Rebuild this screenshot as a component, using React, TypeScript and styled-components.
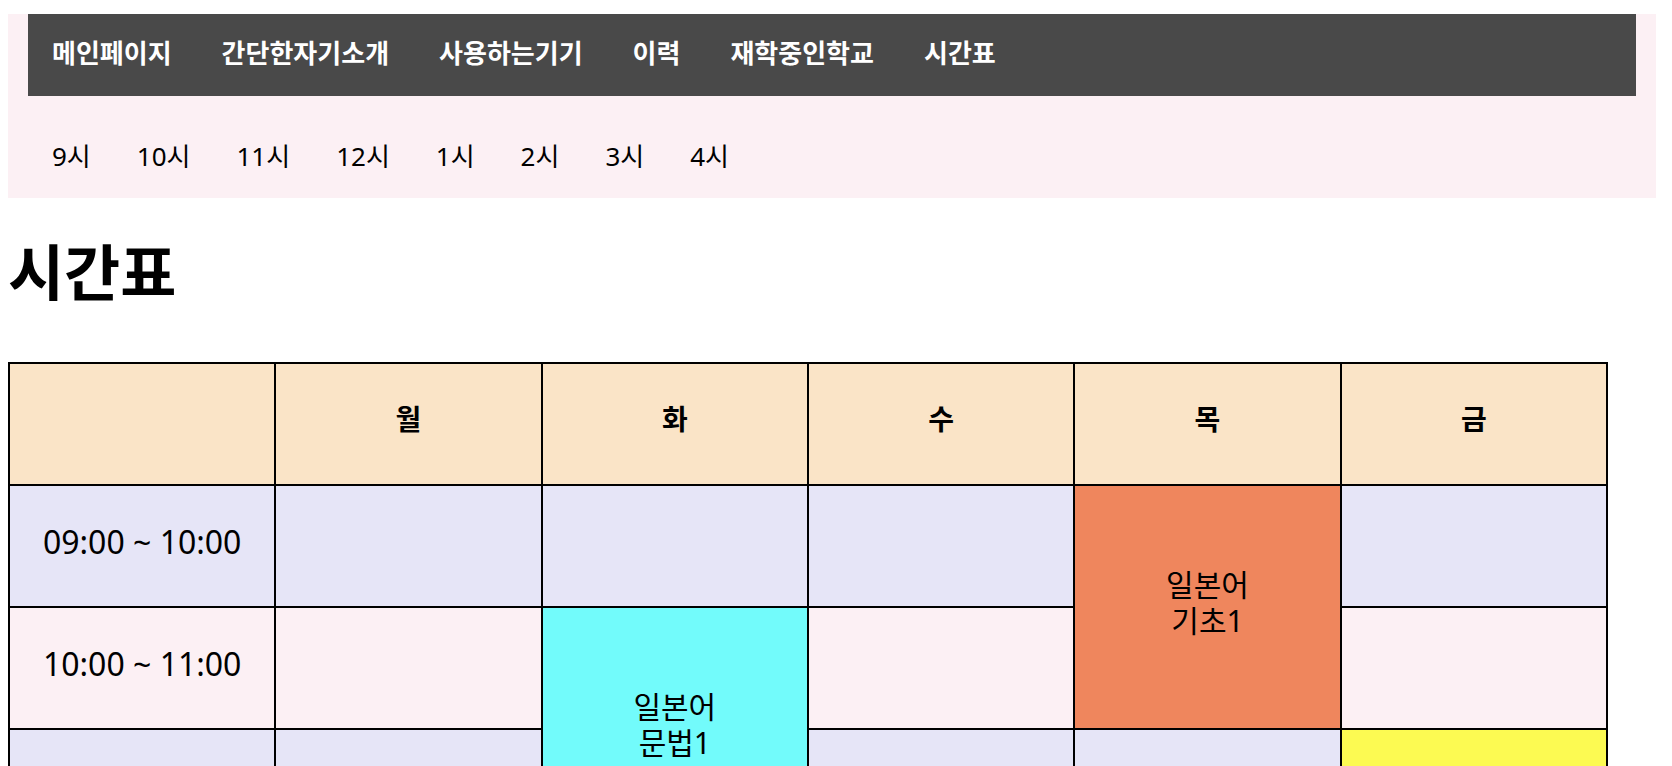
import styled, { createGlobalStyle } from "styled-components";

const GlobalStyle = createGlobalStyle`
  body {
    margin: 0;
    background: #ffffff;
    color: #000000;
    font-family: "Noto Sans", "Noto Sans CJK KR", sans-serif;
  }
`;

const Page = styled.div`
  padding: 14px 16px 40px 8px;
`;

const Header = styled.header`
  background: #fcf0f4;
  padding: 0 20px 22px;
`;

const MainNav = styled.nav`
  display: flex;
  align-items: center;
  gap: 50px;
  height: 82px;
  box-sizing: border-box;
  padding: 0 24px 7px;
  background: #494949;
`;

const NavLink = styled.a`
  color: #ffffff;
  font-size: 26px;
  font-weight: 700;
  text-decoration: none;
  white-space: nowrap;
`;

const HourNav = styled.div`
  display: flex;
  gap: 46px;
  margin-top: 41px;
  padding-left: 24px;
  line-height: 39px;
`;

const HourLink = styled.a`
  color: #000000;
  font-size: 26px;
  text-decoration: none;
`;

const Title = styled.h1`
  margin: 40px 0 55px;
  font-size: 61px;
  line-height: 69px;
  font-weight: 700;
`;

const Table = styled.table`
  width: 1600px;
  table-layout: fixed;
  border-collapse: collapse;
  text-align: center;
`;

const HeadCell = styled.th`
  height: 122px;
  box-sizing: border-box;
  padding: 0 0 12px;
  border: 2px solid #000000;
  background: #fae4c7;
  font-size: 28px;
  font-weight: 700;
`;

const Cell = styled.td<{ $bg: string }>`
  height: 122px;
  box-sizing: border-box;
  padding: 0 0 8px;
  border: 2px solid #000000;
  background: ${({ $bg }) => $bg};
  font-size: 30px;
  line-height: 36px;
`;

const TimeCell = styled(Cell)`
  font-size: 32px;
`;

const days = ["월", "화", "수", "목", "금"];
const hours = ["9시", "10시", "11시", "12시", "1시", "2시", "3시", "4시"];
const menu = ["메인페이지", "간단한자기소개", "사용하는기기", "이력", "재학중인학교", "시간표"];

type Lesson = { lines: string[]; color: string; span: number };

// key: `${row}-${day}`
const lessons: Record<string, Lesson> = {
  "0-3": { lines: ["일본어", "기초1"], color: "#ef865d", span: 2 },
  "1-1": { lines: ["일본어", "문법1"], color: "#72fbfb", span: 2 },
  "2-4": { lines: ["일본어", "회화1"], color: "#fcfa52", span: 2 },
  "4-0": { lines: ["일본어", "독해1"], color: "#9be59b", span: 2 },
  "5-2": { lines: ["일본어", "작문1"], color: "#d8a8f0", span: 2 },
};

const times = [
  "09:00 ~ 10:00",
  "10:00 ~ 11:00",
  "11:00 ~ 12:00",
  "12:00 ~ 13:00",
  "13:00 ~ 14:00",
  "14:00 ~ 15:00",
  "15:00 ~ 16:00",
  "16:00 ~ 17:00",
];

const rowColor = (row: number) => (row % 2 === 0 ? "#e6e5f7" : "#fcf0f4");

const isCovered = (row: number, day: number) => {
  for (let r = 0; r < row; r++) {
    const l = lessons[`${r}-${day}`];
    if (l && r + l.span > row) return true;
  }
  return false;
};

const App = () => {
  return (
    <Page>
      <GlobalStyle />
      <Header>
        <MainNav>
          {menu.map((item) => (
            <NavLink key={item} href="#">
              {item}
            </NavLink>
          ))}
        </MainNav>
        <HourNav>
          {hours.map((h) => (
            <HourLink key={h} href="#">
              {h}
            </HourLink>
          ))}
        </HourNav>
      </Header>

      <Title>시간표</Title>

      <Table>
        <thead>
          <tr>
            <HeadCell></HeadCell>
            {days.map((d) => (
              <HeadCell key={d}>{d}</HeadCell>
            ))}
          </tr>
        </thead>
        <tbody>
          {times.map((t, row) => (
            <tr key={t}>
              <TimeCell $bg={rowColor(row)}>{t}</TimeCell>
              {days.map((d, day) => {
                if (isCovered(row, day)) return null;
                const lesson = lessons[`${row}-${day}`];
                if (lesson) {
                  return (
                    <Cell key={d} $bg={lesson.color} rowSpan={lesson.span}>
                      {lesson.lines[0]}
                      <br />
                      {lesson.lines[1]}
                    </Cell>
                  );
                }
                return <Cell key={d} $bg={rowColor(row)} />;
              })}
            </tr>
          ))}
        </tbody>
      </Table>
    </Page>
  );
};

export default App;
